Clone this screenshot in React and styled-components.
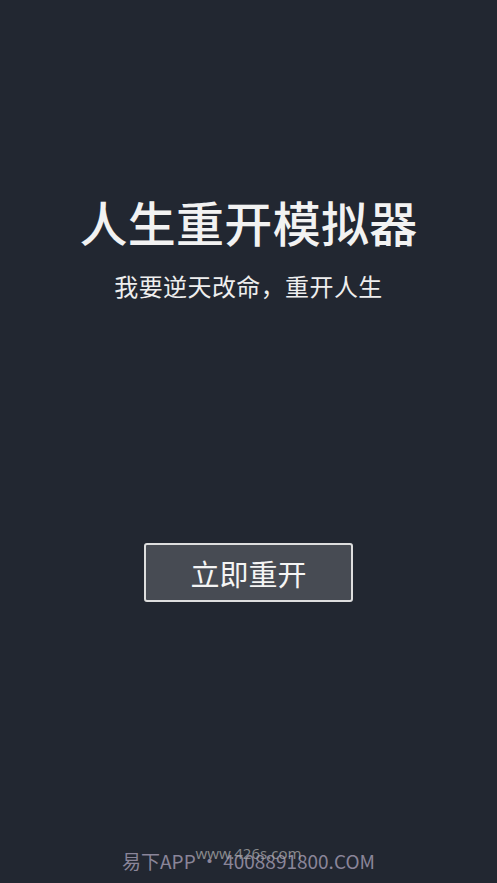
import React from 'react'
import { styled, createGlobalStyle } from 'styled-components'

const Global = createGlobalStyle`
html, body {
  margin: 0;
  padding: 0;
  background: #222731;
}
`

const Page = styled.div`
width: 100%;
height: 883px;
background: #222731;
display: flex;
flex-direction: column;
align-items: center;
font-family: "Noto Sans CJK SC", "Noto Sans", sans-serif;
overflow: hidden;
`

const Title = styled.h1`
margin: 197px 0 0;
font-size: 48px;
line-height: 48px;
font-weight: 500;
color: #f2f2f2;
letter-spacing: 0.3px;
`

const Subtitle = styled.p`
margin: 29px 0 0;
font-size: 24px;
line-height: 24px;
color: #eeeeee;
letter-spacing: 0.4px;
`

const Button = styled.button`
margin-top: 245px;
width: 209px;
height: 59px;
background: #474b53;
border: 2px solid #dedede;
border-radius: 3px;
color: #f4f4f4;
font-family: inherit;
font-size: 29px;
cursor: pointer;
`

const Footer = styled.div`
margin-top: auto;
margin-bottom: 10px;
position: relative;
`

const Watermark = styled.div`
font-size: 19px;
line-height: 24px;
color: #8a8599;
white-space: nowrap;
`

const Overlay = styled.span`
position: absolute;
left: 50%;
top: -6px;
transform: translateX(-50%);
font-family: "Noto Sans", sans-serif;
font-size: 15px;
color: rgba(170, 170, 170, 0.75);
white-space: nowrap;
`

const App = () => {
  return (
    <Page>
      <Global />
      <Title>人生重开模拟器</Title>
      <Subtitle>我要逆天改命，重开人生</Subtitle>
      <Button>立即重开</Button>
      <Footer>
        <Watermark>易下APP • 4008891800.COM</Watermark>
        <Overlay>www.426s.com</Overlay>
      </Footer>
    </Page>
  )
}

export default App
